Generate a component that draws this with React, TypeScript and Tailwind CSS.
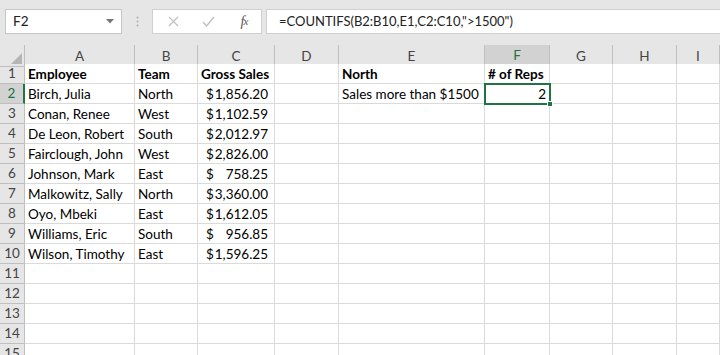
import React from "react";

const cols = ["A", "B", "C", "D", "E", "F", "G", "H", "I"];

type Row = { a?: string; b?: string; c?: string; e?: string; f?: string; bold?: boolean };

const rows: Row[] = [
  { a: "Employee", b: "Team", c: "Gross Sales", e: "North", f: "# of Reps", bold: true },
  { a: "Birch, Julia", b: "North", c: "1,856.20", e: "Sales more than $1500", f: "2" },
  { a: "Conan, Renee", b: "West", c: "1,102.59" },
  { a: "De Leon, Robert", b: "South", c: "2,012.97" },
  { a: "Fairclough, John", b: "West", c: "2,826.00" },
  { a: "Johnson, Mark", b: "East", c: "758.25" },
  { a: "Malkowitz, Sally", b: "North", c: "3,360.00" },
  { a: "Oyo, Mbeki", b: "East", c: "1,612.05" },
  { a: "Williams, Eric", b: "South", c: "956.85" },
  { a: "Wilson, Timothy", b: "East", c: "1,596.25" },
  {}, {}, {}, {}, {},
];

const gridCols = "grid grid-cols-[25px_110px_63px_77px_64px_146px_65px_63px_64px_1fr]";

function Cell({ children, className = "" }: { children?: React.ReactNode; className?: string }) {
  return (
    <div className={`h-[20px] border-r border-b border-[#dadada] bg-white flex items-center px-[3px] pt-[1px] whitespace-nowrap ${className}`}>
      {children}
    </div>
  );
}

export default function App() {
  return (
    <div className="w-[720px] h-[355px] overflow-hidden bg-white text-[#000] font-['Lato','Noto_Sans',sans-serif]">
      {/* toolbar */}
      <div className="h-[45px] bg-[#e6e6e6] flex items-start pt-[9px] pl-[5px]">
        <div className="w-[117px] h-[25px] bg-white border border-[#c6c6c6] flex items-center justify-between pl-[7px] pr-[7px] text-[13.5px] text-[#222]">
          <span>F2</span>
          <svg width="8" height="5" viewBox="0 0 8 5"><path d="M0 0h8L4 4.5z" fill="#777" /></svg>
        </div>
        <div className="w-[30px] h-[25px] flex items-center justify-center">
          <svg width="3" height="11" viewBox="0 0 3 11">
            <circle cx="1.5" cy="1.5" r="1" fill="#b0b0b0" />
            <circle cx="1.5" cy="5.5" r="1" fill="#b0b0b0" />
            <circle cx="1.5" cy="9.5" r="1" fill="#b0b0b0" />
          </svg>
        </div>
        <div className="w-[110px] h-[25px] bg-white border border-[#d0d0d0] flex items-center">
          <div className="w-[37px] flex justify-center pl-[3px]">
            <svg width="11" height="11" viewBox="0 0 11 11"><path d="M1 1l9 9M10 1l-9 9" stroke="#c0c0c0" strokeWidth="1.2" /></svg>
          </div>
          <div className="w-[37px] flex justify-center">
            <svg width="13" height="11" viewBox="0 0 13 11"><path d="M1 6l3.5 4L12 1" stroke="#c0c0c0" strokeWidth="1.4" fill="none" /></svg>
          </div>
          <div className="w-[34px] flex justify-center text-[14px] italic text-[#555] font-['Liberation_Serif',serif] tracking-[-1px]">
            f<span className="text-[11px] relative top-[2px]">x</span>
          </div>
        </div>
        <div className="ml-[4px] flex-1 h-[25px] bg-white border-y border-l border-[#d0d0d0] flex items-center pl-[12px] text-[13px] text-[#222]">
          =COUNTIFS(B2:B10,E1,C2:C10,"&gt;1500")
        </div>
      </div>

      {/* sheet */}
      <div className="relative">
        <div className={`${gridCols} h-[19px] text-[13.5px] text-[#444]`}>
          <div className="relative bg-[#e6e6e6] border-r border-b border-[#bfbfbf]">
            <svg className="absolute right-[2px] bottom-[2px]" width="11" height="11" viewBox="0 0 11 11"><path d="M11 0v11H0z" fill="#b5b5b5" /></svg>
          </div>
          {cols.map((c) => (
            <div
              key={c}
              className={
                c === "F"
                  ? "bg-[#d2d2d2] border-r border-[#bfbfbf] border-b-2 border-b-[#217346] flex items-center justify-center text-[#217346]"
                  : "bg-[#e6e6e6] border-r border-b border-[#bfbfbf] flex items-center justify-center"
              }
            >
              {c}
            </div>
          ))}
        </div>
        {rows.map((r, i) => (
          <div key={i} className={`${gridCols} text-[13.5px]`}>
            <div
              className={
                i === 1
                  ? "h-[20px] bg-[#d2d2d2] border-b border-[#bfbfbf] border-r-2 border-r-[#217346] flex items-center justify-center text-[13.5px] text-[#217346]"
                  : "h-[20px] bg-[#e6e6e6] border-r border-b border-[#bfbfbf] flex items-center justify-center text-[13.5px] text-[#444]"
              }
            >
              {i + 1}
            </div>
            <Cell className={r.bold ? "font-bold" : ""}>{r.a}</Cell>
            <Cell className={r.bold ? "font-bold" : ""}>{r.b}</Cell>
            <Cell className={r.bold ? "font-bold" : "justify-between pl-[8px] pr-[6px]"}>
              {r.bold ? r.c : r.c ? (<><span>$</span><span>{r.c}</span></>) : null}
            </Cell>
            <Cell />
            <Cell className={r.bold ? "font-bold" : ""}>{r.e}</Cell>
            <Cell className={r.bold ? "font-bold" : "justify-end"}>{r.f}</Cell>
            <Cell />
            <Cell />
            <Cell />
          </div>
        ))}
        {/* selected cell F2 */}
        <div className="absolute left-[484px] top-[38px] w-[67px] h-[22px] border-2 border-[#217346] pointer-events-none">
          <div className="absolute right-[-4px] bottom-[-4px] w-[6px] h-[6px] bg-[#217346] border border-white" />
        </div>
      </div>
    </div>
  );
}
